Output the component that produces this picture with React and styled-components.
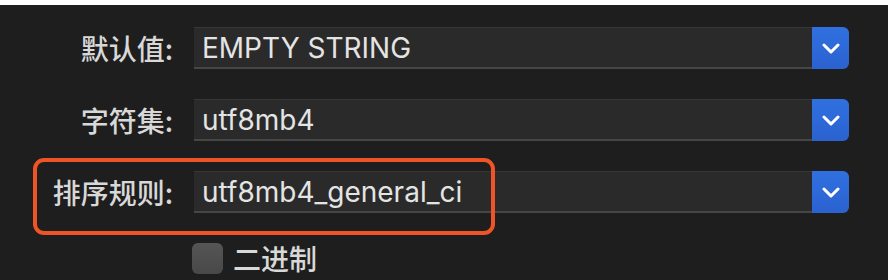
import React from "react";
import styled, { createGlobalStyle } from "styled-components";

const GlobalStyle = createGlobalStyle`
  body {
    margin: 0;
    background: #ffffff;
  }
`;

const rows = [
  { label: "默认值:", value: "EMPTY STRING" },
  { label: "字符集:", value: "utf8mb4" },
  { label: "排序规则:", value: "utf8mb4_general_ci" },
];

export default function App() {
  return (
    <>
      <GlobalStyle />
      <Panel>
        {rows.map((row) => (
          <React.Fragment key={row.label}>
            <Label>{row.label}</Label>
            <Select>
              <Value>{row.value}</Value>
              <Arrow>
                <svg width="18" height="11" viewBox="0 0 18 11">
                  <polyline
                    points="2,2 9,9 16,2"
                    fill="none"
                    stroke="#fff"
                    strokeWidth="3"
                    strokeLinecap="round"
                    strokeLinejoin="round"
                  />
                </svg>
              </Arrow>
            </Select>
          </React.Fragment>
        ))}
        <CheckRow>
          <Checkbox />
          <CheckText>二进制</CheckText>
        </CheckRow>
        {/* 标注框 */}
        <Highlight />
      </Panel>
    </>
  );
}

const Panel = styled.div`
  position: relative;
  box-sizing: border-box;
  width: 888px;
  height: 275px;
  margin-top: 5px;
  padding-top: 22px;
  background: #1e1e1e;
  display: grid;
  grid-template-columns: 173px 655px;
  grid-auto-rows: 42px;
  column-gap: 21px;
  row-gap: 30px;
  align-items: center;
  font-family: Inter, "Noto Sans CJK SC", sans-serif;
`;

const Label = styled.div`
  justify-self: end;
  font-family: "Noto Sans CJK SC", sans-serif;
  font-size: 28px;
  font-weight: 500;
  line-height: 42px;
  color: #d8d8d8;
  white-space: nowrap;
`;

const Select = styled.div`
  display: flex;
  height: 42px;
`;

const Value = styled.div`
  flex: 1;
  box-sizing: border-box;
  padding-left: 8px;
  display: flex;
  align-items: center;
  background: #2a2a2a;
  border-top: 1px solid #363636;
  border-bottom: 2px solid #464646;
  font-size: 28px;
  color: #e4e4e4;
  white-space: nowrap;
`;

const Arrow = styled.div`
  width: 37px;
  display: flex;
  align-items: center;
  justify-content: center;
  background: linear-gradient(#3170e0, #2a62cf);
  border-radius: 0 6px 6px 0;
`;

const CheckRow = styled.div`
  grid-column: 2;
  display: flex;
  align-items: center;
  gap: 10px;
  margin-left: -2px;
  height: 31px;
  margin-top: -12px;
`;

const Checkbox = styled.span`
  width: 31px;
  height: 31px;
  box-sizing: border-box;
  border-radius: 6px;
  background: linear-gradient(#555555, #484848);
`;

const CheckText = styled.span`
  font-family: "Noto Sans CJK SC", sans-serif;
  font-size: 28px;
  font-weight: 500;
  color: #d8d8d8;
`;

const Highlight = styled.div`
  position: absolute;
  left: 33px;
  top: 153px;
  width: 462px;
  height: 77px;
  box-sizing: border-box;
  border: 4px solid #ef5427;
  border-radius: 11px;
  pointer-events: none;
`;
